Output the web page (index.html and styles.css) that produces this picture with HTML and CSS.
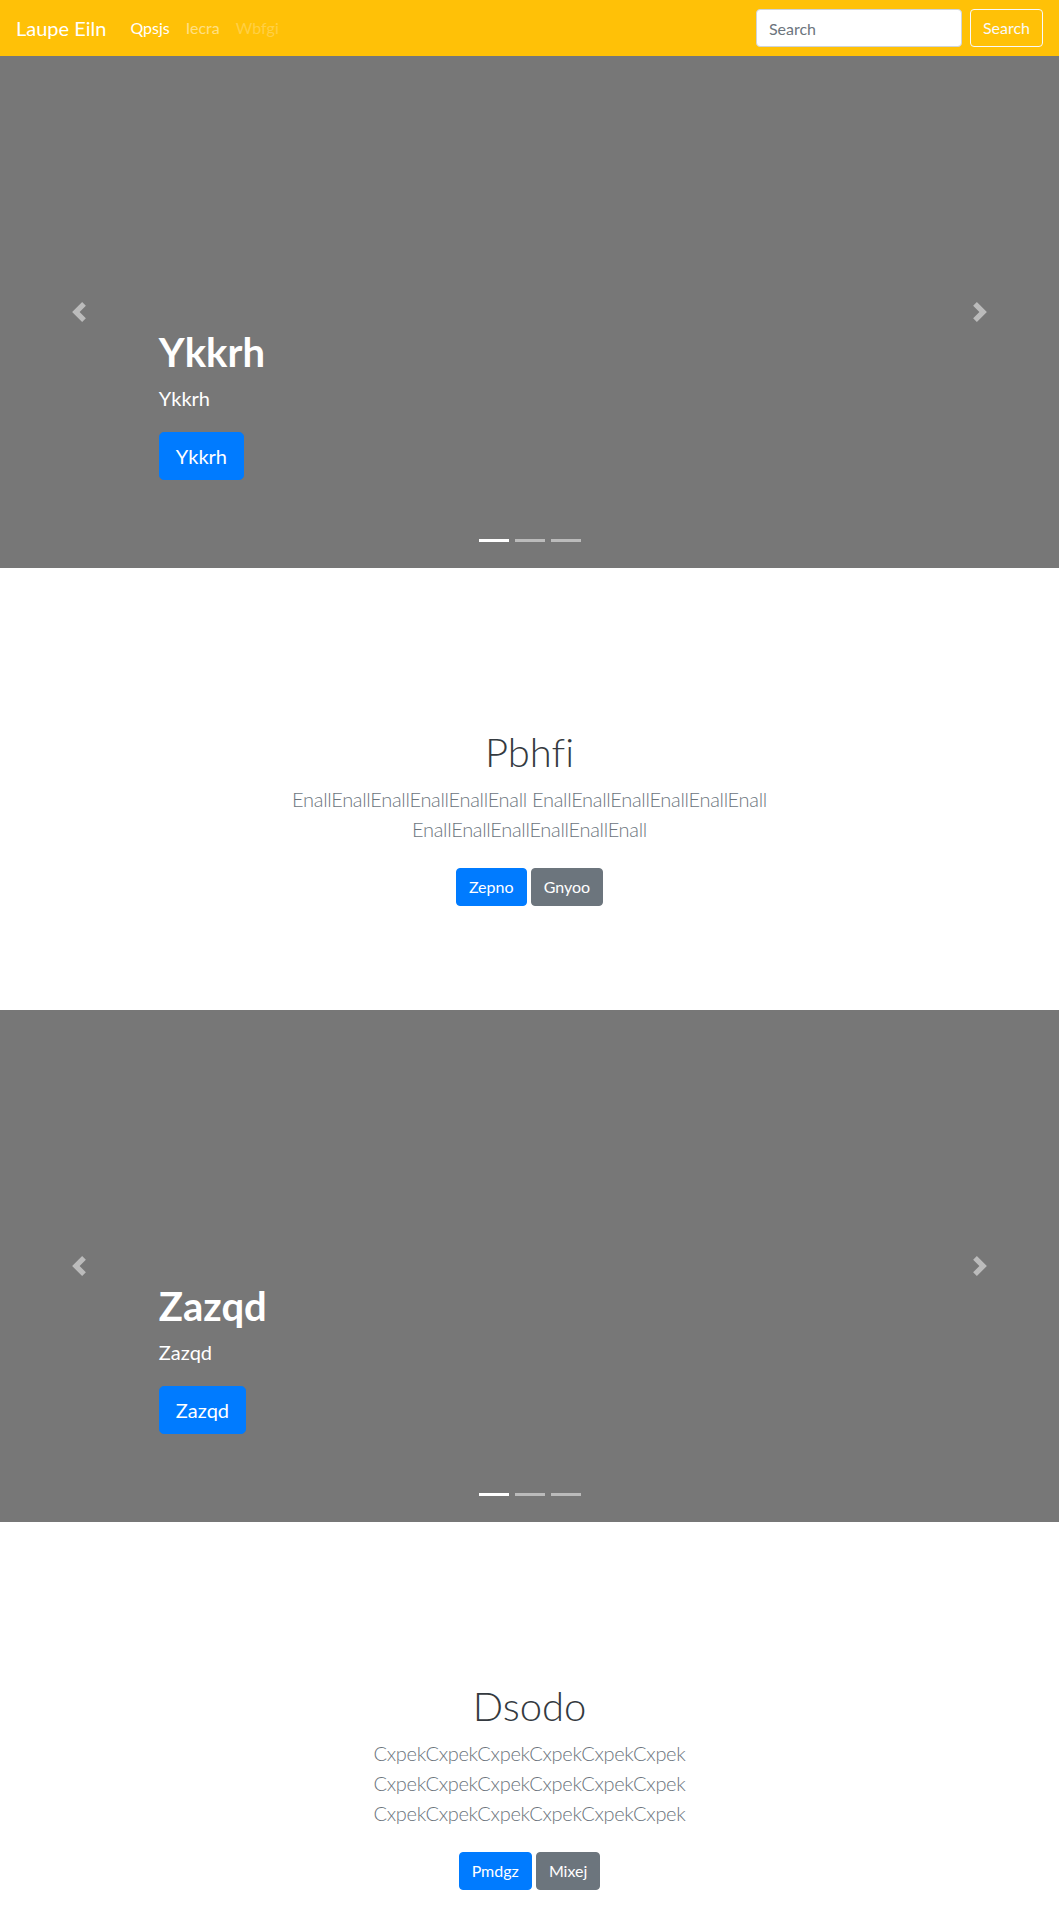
FILE: index.html
```html
<!DOCTYPE html>
<html lang="en">
<head>
<meta charset="utf-8">
<title>Laupe Eiln</title>
<link rel="stylesheet" href="styles.css">
</head>
<body>
<nav class="navbar">
  <a class="brand" href="#">Laupe Eiln</a>
  <ul class="nav-links">
    <li><a class="nav-link active" href="#">Qpsjs</a></li>
    <li><a class="nav-link" href="#">Iecra</a></li>
    <li><a class="nav-link disabled" href="#">Wbfgi</a></li>
  </ul>
  <form class="search">
    <input class="form-control" type="text" placeholder="Search">
    <button class="btn btn-outline-light" type="button">Search</button>
  </form>
</nav>

<div class="carousel">
  <a class="control" href="#"><svg class="control-icon" viewBox="0 0 8 8"><path d="M5.25 0l-4 4 4 4 1.5-1.5-2.5-2.5 2.5-2.5-1.5-1.5z"/></svg></a>
  <div class="carousel-center">
    <div class="caption">
      <h1 class="caption-title">Ykkrh</h1>
      <p class="caption-text">Ykkrh</p>
      <p class="caption-action"><a class="btn btn-lg btn-primary" href="#">Ykkrh</a></p>
    </div>
    <ol class="indicators"><li class="active"></li><li></li><li></li></ol>
  </div>
  <a class="control" href="#"><svg class="control-icon" viewBox="0 0 8 8"><path d="M2.75 0l-1.5 1.5 2.5 2.5-2.5 2.5 1.5 1.5 4-4-4-4z"/></svg></a>
</div>

<section class="intro">
  <div class="intro-body">
    <h1 class="intro-heading">Pbhfi</h1>
    <p class="lead">EnallEnallEnallEnallEnallEnall EnallEnallEnallEnallEnallEnall EnallEnallEnallEnallEnallEnall</p>
    <p class="actions"><a class="btn btn-primary" href="#">Zepno</a> <a class="btn btn-secondary" href="#">Gnyoo</a></p>
  </div>
</section>

<div class="carousel">
  <a class="control" href="#"><svg class="control-icon" viewBox="0 0 8 8"><path d="M5.25 0l-4 4 4 4 1.5-1.5-2.5-2.5 2.5-2.5-1.5-1.5z"/></svg></a>
  <div class="carousel-center">
    <div class="caption">
      <h1 class="caption-title">Zazqd</h1>
      <p class="caption-text">Zazqd</p>
      <p class="caption-action"><a class="btn btn-lg btn-primary" href="#">Zazqd</a></p>
    </div>
    <ol class="indicators"><li class="active"></li><li></li><li></li></ol>
  </div>
  <a class="control" href="#"><svg class="control-icon" viewBox="0 0 8 8"><path d="M2.75 0l-1.5 1.5 2.5 2.5-2.5 2.5 1.5 1.5 4-4-4-4z"/></svg></a>
</div>

<section class="intro">
  <div class="intro-body">
    <h1 class="intro-heading">Dsodo</h1>
    <p class="lead">CxpekCxpekCxpekCxpekCxpekCxpek CxpekCxpekCxpekCxpekCxpekCxpek CxpekCxpekCxpekCxpekCxpekCxpek</p>
    <p class="actions"><a class="btn btn-primary" href="#">Pmdgz</a> <a class="btn btn-secondary" href="#">Mixej</a></p>
  </div>
</section>
</body>
</html>
```

FILE: styles.css
```css
* { box-sizing: border-box; }
html, body { margin: 0; padding: 0; }
body {
  font-family: Lato, "Open Sans", "Liberation Sans", sans-serif;
  font-size: 16px;
  line-height: 1.5;
  color: #212529;
  background: #fff;
  font-variant-ligatures: none;
}
a { text-decoration: none; }

/* navbar */
.navbar {
  display: flex;
  align-items: center;
  height: 56px;
  padding: 8px 16px;
  background: #ffc107;
}
.brand {
  font-size: 20px;
  line-height: 30px;
  padding: 5px 0;
  margin-right: 16px;
  color: #fff;
}
.nav-links {
  display: flex;
  list-style: none;
  margin: 0;
  padding: 0;
  flex: 1;
}
.nav-link {
  display: block;
  padding: 8px;
  color: rgba(255,255,255,.5);
}
.nav-link.active { color: #fff; }
.nav-link.disabled { color: rgba(255,255,255,.25); }
.search { display: flex; align-items: center; }
.form-control {
  width: 206px;
  height: 38px;
  margin-right: 8px;
  padding: 6px 12px;
  font: inherit;
  font-size: 16px;
  color: #495057;
  background: #fff;
  border: 1px solid #ced4da;
  border-radius: 4px;
}
.form-control::placeholder { color: #6c757d; }

.btn {
  display: inline-block;
  font: inherit;
  font-size: 16px;
  line-height: 24px;
  padding: 6px 12px;
  border: 1px solid transparent;
  border-radius: 4px;
  color: #fff;
  text-align: center;
  vertical-align: middle;
}
.btn-outline-light {
  background: transparent;
  border-color: #f8f9fa;
  color: #f8f9fa;
}
.btn-primary { background: #007bff; border-color: #007bff; }
.btn-secondary { background: #6c757d; border-color: #6c757d; }
.btn-lg {
  font-size: 20px;
  line-height: 30px;
  padding: 8px 16px;
  border-radius: 4.8px;
}

/* carousel */
.carousel {
  display: grid;
  grid-template-columns: 15% 1fr 15%;
  height: 512px;
  background: #777;
  color: #fff;
}
.control {
  display: flex;
  align-items: center;
  justify-content: center;
  opacity: .5;
}
.control-icon { width: 20px; height: 20px; fill: #fff; }
.carousel-center {
  display: flex;
  flex-direction: column;
  justify-content: flex-end;
}
.caption {
  padding: 20px 0;
}
.caption-title {
  margin: 0 0 8px;
  font-size: 40px;
  line-height: 1.2;
  font-weight: 700;
}
.caption-text {
  margin: 0 0 20px;
  font-size: 20px;
  line-height: 1.4;
}
.caption-action { margin: 0 0 20px; }
.indicators {
  display: flex;
  justify-content: center;
  list-style: none;
  margin: 9px 0 16px;
  padding: 0;
}
.indicators li {
  width: 30px;
  height: 3px;
  margin: 0 3px;
  background: #fff;
  opacity: .5;
  box-sizing: content-box;
  border-top: 10px solid transparent;
  border-bottom: 10px solid transparent;
  background-clip: padding-box;
}
.indicators li.active { opacity: 1; }

/* intro section */
.intro {
  padding: 160px 15px 80px;
  text-align: center;
}
.intro-body {
  max-width: 560px;
  margin: 0 auto;
}
.intro-heading {
  margin: 0 0 8px;
  font-size: 40px;
  line-height: 1.2;
  font-weight: 300;
  color: #343a40;
}
.lead {
  margin: 0 0 16px;
  font-size: 20px;
  font-weight: 300;
  letter-spacing: -0.3px;
  color: #6c757d;
}
.actions { margin: 0 0 16px; }
.actions .btn { margin: 8px 0; }
```
